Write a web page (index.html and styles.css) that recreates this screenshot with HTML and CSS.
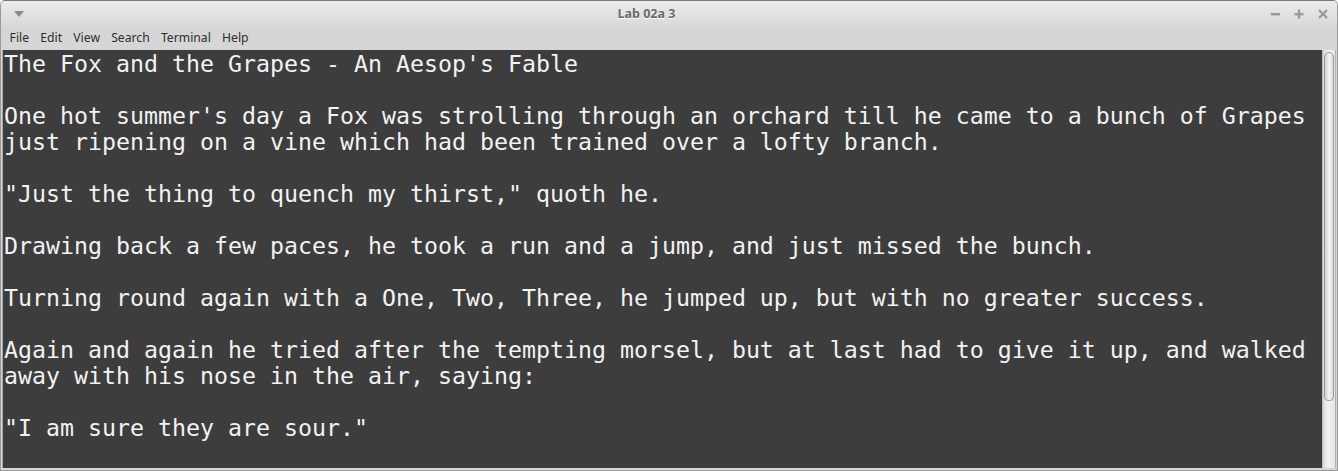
FILE: index.html
```html
<!DOCTYPE html>
<html>
<head>
<meta charset="utf-8">
<link rel="stylesheet" href="styles.css">
</head>
<body>
<div class="window">
  <div class="titlebar">
    <div class="menu-arrow"><svg width="12" height="8" viewBox="0 0 12 8"><path d="M1 1 L11 1 L6 7 Z" fill="#8a8a8a"/></svg></div>
    <div class="title">Lab 02a 3</div>
    <div class="controls">
      <svg width="14" height="14" viewBox="0 0 14 14"><rect x="3" y="6" width="9" height="2.4" fill="#9a9a9a"/></svg>
      <svg width="14" height="14" viewBox="0 0 14 14"><rect x="2.5" y="6" width="9" height="2.4" fill="#9a9a9a"/><rect x="5.8" y="2.6" width="2.4" height="9" fill="#9a9a9a"/></svg>
      <svg width="14" height="14" viewBox="0 0 14 14"><path d="M3 3 L11 11 M11 3 L3 11" stroke="#9a9a9a" stroke-width="2.4"/></svg>
    </div>
  </div>
  <div class="menubar">
    <span class="menu-item">File</span>
    <span class="menu-item">Edit</span>
    <span class="menu-item">View</span>
    <span class="menu-item">Search</span>
    <span class="menu-item">Terminal</span>
    <span class="menu-item">Help</span>
  </div>
  <div class="content">
    <pre class="term">The Fox and the Grapes - An Aesop's Fable

One hot summer's day a Fox was strolling through an orchard till he came to a bunch of Grapes
just ripening on a vine which had been trained over a lofty branch.

"Just the thing to quench my thirst," quoth he.

Drawing back a few paces, he took a run and a jump, and just missed the bunch.

Turning round again with a One, Two, Three, he jumped up, but with no greater success.

Again and again he tried after the tempting morsel, but at last had to give it up, and walked
away with his nose in the air, saying:

"I am sure they are sour."</pre>
    <div class="scrollbar"><div class="thumb"></div></div>
  </div>
</div>
</body>
</html>
```

FILE: styles.css
```css
html, body {
  margin: 0;
  padding: 0;
  background: #ffffff;
}
body {
  width: 1338px;
  height: 471px;
  overflow: hidden;
}
.window {
  box-sizing: border-box;
  width: 1338px;
  height: 471px;
  border: 1px solid #9a9a9a;
  border-top-color: #7a7a7a;
  border-radius: 5px 5px 0 0;
  background: #d6d6d6;
  display: flex;
  flex-direction: column;
  overflow: hidden;
  padding: 0 1px 2px 1px;
}
.titlebar {
  height: 25px;
  display: flex;
  align-items: center;
  background: linear-gradient(#ebebeb, #d9d9d9);
  font-family: "Noto Sans", "Open Sans", sans-serif;
  margin: 0 -1px;
}
.menu-arrow {
  width: 30px;
  display: flex;
  justify-content: center;
  padding-left: 6px;
  box-sizing: border-box;
}
.title {
  flex: 1;
  text-align: center;
  font-size: 12.5px;
  font-weight: bold;
  color: #6a6a6a;
  text-shadow: 0 1px 0 #ffffff;
  padding-right: 6px;
}
.controls {
  display: flex;
  gap: 10px;
  padding-right: 7px;
  width: 62px;
  justify-content: flex-end;
}
.menubar {
  height: 24px;
  display: flex;
  align-items: center;
  padding-left: 2px;
  padding-bottom: 2px;
  box-sizing: border-box;
  font-family: "Noto Sans", "Open Sans", sans-serif;
  font-size: 12.2px;
  color: #2e2e2e;
  background: #d6d6d6;
}
.menu-item {
  padding: 0 5.6px;
}
.content {
  flex: 1;
  display: flex;
  border-left: 1px solid #a8a8a8;
  min-height: 0;
}
.term {
  flex: 1;
  margin: 0;
  padding: 1px 0 0 1px;
  background: #3d3d3d;
  color: #f2f2f2;
  font-family: "DejaVu Sans Mono", monospace;
  font-size: 23.25px;
  line-height: 26px;
  white-space: pre;
  overflow: hidden;
}
.scrollbar {
  width: 14px;
  background: linear-gradient(90deg, #d8d8d8, #f2f2f2 40%, #e6e6e6);
  border-left: 1px solid #bcbcbc;
  border-right: 1px solid #b0b0b0;
  padding: 2px 1px 0 1px;
  box-sizing: border-box;
}
.thumb {
  height: 347px;
  border: 1px solid #9a9a9a;
  border-radius: 6px 6px 5px 5px;
  background: linear-gradient(90deg, #cfcfcf, #f4f4f4 50%, #dcdcdc);
}
```
